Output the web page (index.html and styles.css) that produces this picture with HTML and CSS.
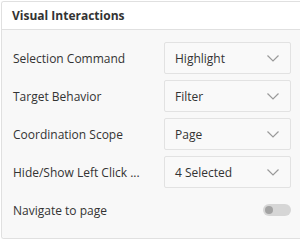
FILE: index.html
```html
<!DOCTYPE html>
<html lang="en">
<head>
  <meta charset="UTF-8" />
  <title>Visual Interactions</title>
  <link rel="stylesheet" href="styles.css">
</head>
<body>
  <div class="panel">
    <div class="panel-header">Visual Interactions</div>
    <div class="panel-body">
      <div class="row">
        <span class="label">Selection Command</span>
        <div class="dropdown">
          <span>Highlight</span>
          <svg class="chevron" width="12" height="7" viewBox="0 0 12 7"><path d="M0.5 0.5 L6 6 L11.5 0.5" fill="none" stroke="#9a9a9a" stroke-width="1.2"/></svg>
        </div>
      </div>
      <div class="row">
        <span class="label">Target Behavior</span>
        <div class="dropdown">
          <span>Filter</span>
          <svg class="chevron" width="12" height="7" viewBox="0 0 12 7"><path d="M0.5 0.5 L6 6 L11.5 0.5" fill="none" stroke="#9a9a9a" stroke-width="1.2"/></svg>
        </div>
      </div>
      <div class="row">
        <span class="label">Coordination Scope</span>
        <div class="dropdown">
          <span>Page</span>
          <svg class="chevron" width="12" height="7" viewBox="0 0 12 7"><path d="M0.5 0.5 L6 6 L11.5 0.5" fill="none" stroke="#9a9a9a" stroke-width="1.2"/></svg>
        </div>
      </div>
      <div class="row">
        <span class="label">Hide/Show Left Click ...</span>
        <div class="dropdown">
          <span>4 Selected</span>
          <svg class="chevron" width="12" height="7" viewBox="0 0 12 7"><path d="M0.5 0.5 L6 6 L11.5 0.5" fill="none" stroke="#9a9a9a" stroke-width="1.2"/></svg>
        </div>
      </div>
      <div class="row">
        <span class="label">Navigate to page</span>
        <div class="toggle-cell">
          <div class="toggle"><div class="knob"></div></div>
        </div>
      </div>
    </div>
  </div>
</body>
</html>
```

FILE: styles.css
```css
body {
  margin: 0;
  font-family: "Open Sans", Arial, sans-serif;
  background-color: #ffffff;
  color: #333333;
}
.panel {
  margin: 1px 0 0 1px;
  border: 1px solid #e0e0e0;
  border-right: none;
  border-radius: 3px 0 0 3px;
  overflow: hidden;
}
.panel-header {
  height: 27px;
  line-height: 27px;
  padding-left: 10px;
  font-size: 12px;
  font-weight: 700;
  background-color: #ffffff;
  border-bottom: 1px solid #e0e0e0;
}
.panel-body {
  background-color: #f8f8f8;
  padding: 12px 0 12px 11px;
  display: flex;
  flex-direction: column;
  gap: 6px;
}
.row {
  display: flex;
  align-items: center;
  height: 32px;
}
.label {
  width: 151px;
  font-size: 12px;
}
.dropdown {
  width: 104px;
  height: 30px;
  border: 1px solid #e2e2e2;
  border-radius: 2px;
  background-color: #f9f9f9;
  display: flex;
  align-items: center;
  justify-content: space-between;
  padding: 0 11px 0 10px;
  font-size: 12px;
}
.chevron {
  display: block;
}
.toggle-cell {
  width: 127px;
  display: flex;
  justify-content: flex-end;
}
.toggle {
  width: 28px;
  height: 12px;
  border-radius: 6px;
  background-color: #d6d6d6;
  display: flex;
  align-items: center;
  padding-left: 2px;
  box-sizing: border-box;
}
.knob {
  width: 8px;
  height: 8px;
  border-radius: 50%;
  background-color: #a3a3a3;
}
```
